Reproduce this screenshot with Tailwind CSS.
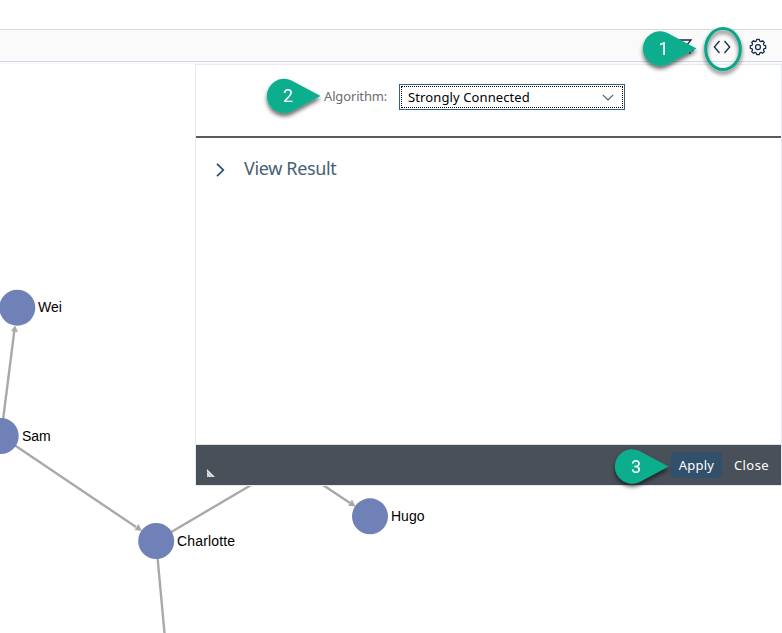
<!DOCTYPE html>
<html lang="en">
<head>
<meta charset="utf-8">
<title>Network Analysis</title>
<script src="https://cdn.jsdelivr.net/npm/@tailwindcss/browser@4"></script>
</head>
<body class="relative h-[633px] w-[782px] overflow-hidden bg-white font-['Noto_Sans',sans-serif]">
<!-- graph canvas -->
<svg class="absolute inset-0 font-['Liberation_Sans',sans-serif] text-[14px]" width="782" height="633" viewBox="0 0 782 633">
  <g stroke="#a9a9a9" stroke-width="2.4" fill="none">
    <path d="M1 436L14.300 331"/><path d="M1 436L136 527"/><path d="M156 541L252 484.500"/><path d="M156 541L164.500 633"/><path d="M320 483L350 503"/>
  </g>
  <g fill="#a9a9a9">
    <path d="M15 325.500L18 332L11 331.300Z"/><path d="M142 531L134.500 530L138.500 524Z"/><path d="M355.500 506.500L348 505.800L352 499.500Z"/>
  </g>
  <g fill="#6f81b7">
    <circle cx="17.300" cy="307.700" r="18"/><circle cx="0.700" cy="436" r="18"/><circle cx="156.200" cy="541" r="18"/><circle cx="370" cy="516.300" r="18"/>
  </g>
  <g fill="#000">
    <text x="38" y="312">Wei</text><text x="22" y="441">Sam</text><text x="177" y="546" textLength="58">Charlotte</text><text x="391" y="521">Hugo</text>
  </g>
</svg>

<div class="relative flex h-full flex-col">
  <header class="mt-[29px] flex h-[33px] shrink-0 items-center justify-end border-t border-b border-t-[#d9d9d9] border-b-[#d1dae3] bg-[#fafafa] pr-[15px] shadow-[0_2px_0_#f7f9fc]">
    <svg class="mr-[18px] mt-[3px]" width="18" height="18" viewBox="0 0 18 18" fill="none" stroke="#172b4d" stroke-width="1.300"><path d="M1 2H14L9 8V15L6 12V8L1 2M9.500 12.500H16.500M13 8.500V16"/></svg>
    <svg class="mr-[18px] mt-[3px]" width="18" height="14" viewBox="0 0 18 14" fill="none" stroke="#16294c" stroke-width="1.300"><path d="M6.500 1L1.300 7L6.500 13M11.500 1L16.700 7L11.500 13"/></svg>
    <svg class="mt-[2px]" width="18" height="18" viewBox="0 0 18 18" fill="none" stroke="#16294c" stroke-width="1.250" stroke-linejoin="round"><path d="M7.300 3L7.700 1.300H10.300L10.700 3L12 3.600L13.600 2.700L15.300 4.400L14.400 6L15 7.300L16.700 7.700V10.300L15 10.700L14.400 12L15.300 13.600L13.600 15.300L12 14.400L10.700 15L10.300 16.700H7.700L7.300 15L6 14.400L4.400 15.300L2.700 13.600L3.600 12L3 10.700L1.300 10.300V7.700L3 7.300L3.600 6L2.700 4.400L4.400 2.700L6 3.600Z"/><circle cx="9" cy="9" r="2.500"/></svg>
  </header>

  <section class="mt-[2px] ml-[195px] flex h-[422px] w-[587px] flex-col border border-[#e5ebf4] bg-white">
    <div class="flex h-[73px] shrink-0 items-start border-b-2 border-[#5b5b5b] pt-[19px] pl-[128px]">
      <label class="w-[75px] pt-[2px] text-[13px] leading-[20px] tracking-[-0.15px] text-[#6a6d70]">Algorithm:</label>
      <div class="h-[26px] w-[226px] border border-[#346187] bg-white p-px">
        <div class="flex h-full items-center justify-between border border-dotted border-black pr-[8px] pl-[6px]">
          <span class="text-[13px] leading-[20px] tracking-[0.11px] text-black">Strongly Connected</span>
          <svg width="12" height="7" viewBox="0 0 12 7" fill="none" stroke="#415a78" stroke-width="1.100"><path d="M.7.800L6 5.900L11.300.800"/></svg>
        </div>
      </div>
    </div>
    <div class="flex h-[306px] shrink-0 items-start pt-[18px] pl-[20px]">
      <svg class="mt-[7px] mr-[19px]" width="9" height="14" viewBox="0 0 9 14" fill="none" stroke="#254a70" stroke-width="1.700"><path d="M1 .800L7.300 7L1 13.200"/></svg>
      <h2 class="text-[18px] leading-[24px] tracking-[-0.35px] text-[#475e75]">View Result</h2>
    </div>
    <footer class="flex h-[41px] shrink-0 items-center border-t border-[#d9e0e7] bg-[#495059] text-[13px] text-white">
      <svg class="mt-[16px] ml-[10px]" width="9" height="9" viewBox="0 0 9 9"><path d="M1 0V8H9Z" fill="#e0e1e2"/><path d="M1 3L6 8M1 6L3 8" stroke="#a0a4a8" stroke-width=".7"/></svg>
      <button class="ml-auto h-[26px] w-[51px] rounded-[3px] bg-[#30506b] pt-px tracking-[0.2px]">Apply</button>
      <button class="ml-[12px] mr-[12px] h-[26px] pt-px tracking-[0.4px]">Close</button>
    </footer>
  </section>
</div>

<!-- step callouts -->
<svg class="absolute inset-0 font-[Roboto,sans-serif] text-[18px]" width="782" height="633" viewBox="0 0 782 633">
  <defs><filter id="s" x="-30%" y="-30%" width="170%" height="180%"><feDropShadow dx="0" dy="3" stdDeviation="2" flood-color="#000" flood-opacity=".6"/></filter>
  <path id="pin" d="M53.500 17L24.500 32.500A17.200 17.200 0 1 1 24.500 1.500Z"/></defs>
  <g fill="#0aae8e" filter="url(#s)">
    <use href="#pin" x="643" y="31.500"/><use href="#pin" x="267" y="79"/><use href="#pin" x="615" y="449.500"/>
  </g>
  <ellipse cx="723" cy="49" rx="17.300" ry="20.500" fill="none" stroke="#0aa587" stroke-width="3" filter="url(#s)"/>
  <g fill="#fff" text-anchor="middle"><text x="663.500" y="55">1</text><text x="288" y="102">2</text><text x="636" y="473">3</text></g>
</svg>
</body>
</html>
